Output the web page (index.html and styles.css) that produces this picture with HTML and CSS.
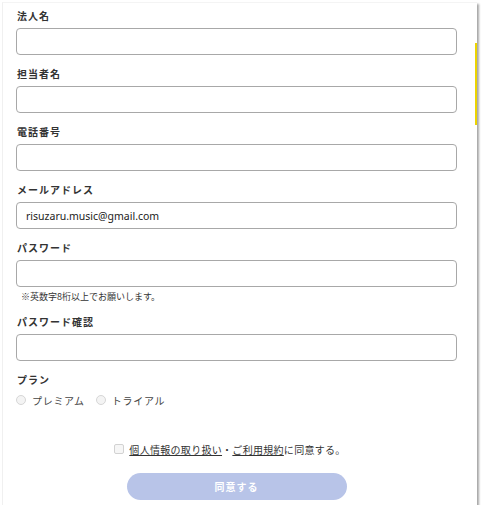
FILE: index.html
```html
<!DOCTYPE html>
<html lang="ja">
<head>
<meta charset="utf-8">
<link rel="stylesheet" href="styles.css">
</head>
<body>
<div class="card">
  <span class="scroll-mark"></span>
  <div class="field">
    <div class="label">法人名</div>
    <div class="input"></div>
  </div>
  <div class="field">
    <div class="label">担当者名</div>
    <div class="input"></div>
  </div>
  <div class="field">
    <div class="label">電話番号</div>
    <div class="input"></div>
  </div>
  <div class="field">
    <div class="label">メールアドレス</div>
    <div class="input"><span class="value">risuzaru.music@gmail.com</span></div>
  </div>
  <div class="field">
    <div class="label">パスワード</div>
    <div class="input"></div>
    <div class="hint">※英数字8桁以上でお願いします。</div>
  </div>
  <div class="field">
    <div class="label">パスワード確認</div>
    <div class="input"></div>
  </div>
  <div class="field">
    <div class="label">プラン</div>
    <div class="radios">
      <span class="radio"><span class="dot"></span>プレミアム</span>
      <span class="radio"><span class="dot"></span>トライアル</span>
    </div>
  </div>
  <div class="agree">
    <span class="check"></span>
    <span class="agree-text"><span class="link">個人情報の取り扱い</span>・<span class="link">ご利用規約</span>に同意する。</span>
  </div>
  <div class="btn-row">
    <div class="btn">同意する</div>
  </div>
</div>
</body>
</html>
```
FILE: styles.css
```css
html, body {
  margin: 0;
  padding: 0;
  background: #ffffff;
}
body {
  font-family: "Noto Sans CJK JP", "Noto Sans", sans-serif;
  color: #333333;
}
.card {
  position: relative;
  box-sizing: border-box;
  margin: 2px 0 0 2px;
  width: 475px;
  height: 503px;
  background: #ffffff;
  border-left: 1px solid #f0f0f0;
  border-top: 1px solid #f4f4f4;
  box-shadow: 2px 2px 2px rgba(0, 0, 0, 0.35);
  padding: 5px 20px 0 13px;
}
.scroll-mark {
  position: absolute;
  right: 0;
  top: 40px;
  width: 2px;
  height: 82px;
  background: #ecd400;
}
.field {
  margin-bottom: 11px;
}
.label {
  font-size: 10px;
  font-weight: 700;
  line-height: 16px;
  letter-spacing: 1px;
  padding-left: 1px;
  color: #333333;
}
.input {
  box-sizing: border-box;
  margin-top: 4px;
  height: 27px;
  border: 1px solid #a8a8a8;
  border-radius: 4px;
  display: flex;
  align-items: center;
  padding-left: 9px;
}
.value {
  font-family: "Noto Sans", sans-serif;
  font-size: 10.5px;
  color: #222222;
}
.hint {
  margin-top: 4px;
  font-size: 9px;
  line-height: 12px;
  padding-left: 5px;
  color: #333333;
}
.radios {
  margin-top: 4px;
  display: flex;
  align-items: center;
  gap: 11px;
  height: 16px;
  font-size: 10px;
  letter-spacing: 0.7px;
  color: #444444;
}
.radio {
  display: flex;
  align-items: center;
  gap: 6px;
}
.dot {
  box-sizing: border-box;
  width: 10px;
  height: 10px;
  border-radius: 50%;
  border: 1px solid #d6d6d6;
  background: #f4f4f4;
}
.agree {
  margin-top: 33px;
  display: flex;
  justify-content: center;
  align-items: center;
  gap: 5px;
  height: 16px;
  font-size: 10px;
  letter-spacing: 0.3px;
  padding-right: 13px;
}
.check {
  box-sizing: border-box;
  width: 10px;
  height: 10px;
  border-radius: 2px;
  border: 1px solid #d2d2d2;
  background: #f6f6f6;
}
.link {
  text-decoration: underline;
}
.btn-row {
  margin-top: 16px;
  display: flex;
  justify-content: center;
}
.btn {
  width: 220px;
  height: 27px;
  border-radius: 14px;
  background: #b8c4e8;
  color: #ffffff;
  font-size: 10px;
  font-weight: 700;
  letter-spacing: 1px;
  display: flex;
  align-items: center;
  justify-content: center;
}
```
